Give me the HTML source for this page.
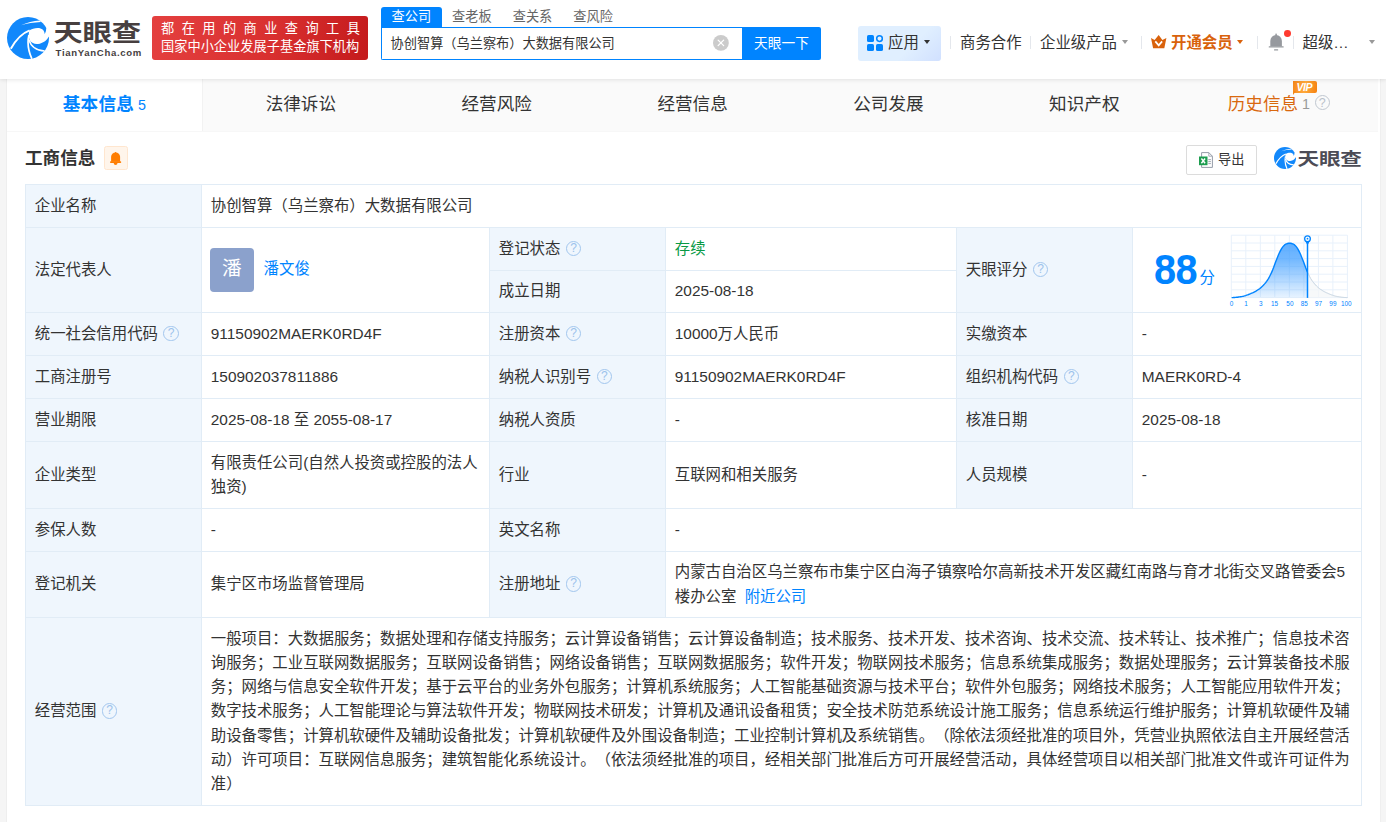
<!DOCTYPE html>
<html lang="zh-CN">
<head>
<meta charset="utf-8">
<title>协创智算（乌兰察布）大数据有限公司 - 天眼查</title>
<style>
*{box-sizing:border-box;}
html,body{margin:0;padding:0;}
body{width:1386px;height:822px;overflow:hidden;background:#f5f5f5;color:#333;
  font-family:"Liberation Sans","Noto Sans CJK SC",sans-serif;font-size:15.4px;
  text-spacing-trim:space-all;position:relative;}
a{color:#0084ff;text-decoration:none;}

/* ---------- header ---------- */
.hd{position:absolute;left:0;top:0;width:1386px;height:79px;background:#fff;
  box-shadow:0 1px 4px rgba(0,0,0,.1);z-index:5;}
.logo-ico{position:absolute;left:7px;top:17px;width:42px;height:42px;}
.logo-cn{position:absolute;left:53.5px;top:11px;font-size:29.4px;line-height:42px;font-weight:700;
  color:#473f3f;letter-spacing:-.3px;white-space:nowrap;transform:scaleY(.82);transform-origin:0 28px;}
.logo-en{position:absolute;left:55.6px;top:46px;font-size:9.6px;line-height:13px;font-weight:700;
  color:#473f3f;letter-spacing:.66px;white-space:nowrap;}
.slogan{position:absolute;left:152px;top:16px;width:216px;height:44px;border-radius:3px;
  background:linear-gradient(100deg,#e4403f 0%,#d93030 55%,#c41a1c 100%);color:#fff;
  font-size:13.2px;line-height:17.6px;padding:4px 0 0 9px;white-space:nowrap;}
.slogan .l1{letter-spacing:7.45px;}
.slogan .l2{letter-spacing:.03px;}

.stabs{position:absolute;left:381px;top:7px;height:21px;white-space:nowrap;font-size:13.2px;line-height:19px;color:#666;}
.stabs span{display:inline-block;width:60.6px;height:21px;text-align:center;vertical-align:top;}
.stabs span.on{background:#0084ff;color:#fff;border-radius:3px 3px 0 0;}
.sbox{position:absolute;left:381px;top:27px;width:362px;height:33px;border:1px solid #0084ff;border-right:0;
  border-radius:0 0 0 2px;background:#fff;font-size:13.2px;line-height:32.6px;padding-left:8.6px;color:#333;white-space:nowrap;}
.sclr{position:absolute;left:712.9px;top:34.9px;width:15.8px;height:15.8px;}
.sbtn{position:absolute;left:742px;top:27px;width:79px;height:33px;background:#0084ff;color:#fff;
  border-radius:0 2px 2px 0;font-size:13.7px;line-height:33.5px;text-align:center;white-space:nowrap;}

.app{position:absolute;left:858px;top:26px;width:83px;height:35px;border-radius:3px;background:linear-gradient(135deg,rgba(224,239,255,0) 62%,rgba(196,212,255,.55) 100%),#e0efff;}
.app svg{position:absolute;left:9px;top:9px;width:16px;height:16px;}
.app b{position:absolute;left:30px;top:0;font-weight:400;font-size:15.4px;line-height:34.8px;color:#333;white-space:nowrap;}
.caret{position:absolute;width:0;height:0;border-left:3.9px solid transparent;border-right:3.9px solid transparent;border-top:4.6px solid #333;}
.sep{position:absolute;top:36px;width:1px;height:13px;background:#e4e7ec;}
.nav{position:absolute;top:26px;height:35px;line-height:34.8px;font-size:15.4px;color:#333;white-space:nowrap;}
.vipnav{color:#d9620c;font-weight:700;line-height:33.8px;}

/* ---------- main container ---------- */
.wrap{position:absolute;left:7px;top:79px;width:1373px;height:760px;background:#fff;box-shadow:-1px 0 0 #eee,1px 0 0 #efefef;}
.tabs{position:absolute;left:0;top:0;width:1371px;height:53px;background:#fafafa;border-bottom:1px solid #f7f7f7;}
.tab{position:absolute;top:0;width:196px;height:52px;line-height:50.6px;text-align:center;font-size:17.6px;color:#333;white-space:nowrap;}
.tab.on{background:#fff;color:#0084ff;font-weight:700;border-right:1px solid #f2f2f2;height:52px;letter-spacing:.25px;}
.tab.on small{font-weight:400;}
.tab small{font-size:14.3px;margin-left:4px;}
.tab.his{color:#d9680e;}
.tab.his small{color:#999;position:relative;top:-1.5px;}

.sec-t{position:absolute;left:18px;top:64.7px;font-size:17.6px;line-height:28px;font-weight:700;color:#333;white-space:nowrap;}
.bellbox{position:absolute;left:97px;top:67px;width:24px;height:24px;border:1px solid #ffe6cf;background:#fff5eb;border-radius:2.5px;}
.bellbox svg{position:absolute;left:5px;top:4.5px;width:12px;height:13px;}
.exp{position:absolute;left:1179px;top:66px;width:71px;height:30px;border:1px solid #dcdcdc;border-radius:2px;background:#fff;
  font-size:13.2px;line-height:28px;color:#333;white-space:nowrap;}
.exp svg{position:absolute;left:12px;top:5.6px;width:14px;height:16px;}
.exp span{position:absolute;left:31px;top:0;}
.wm{position:absolute;left:1266.5px;top:67px;height:24px;white-space:nowrap;}
.wm svg{position:absolute;left:0;top:1px;width:22px;height:22px;}
.wm b{position:absolute;left:24px;top:-2.1px;font-size:21.6px;line-height:28px;font-weight:700;color:#4c4c56;letter-spacing:-.2px;transform:scaleY(.8);transform-origin:0 22.5px;}

.vip{position:absolute;left:110.7px;top:2px;width:24px;height:12px;border-radius:0 2px 2px 0;background:linear-gradient(100deg,#f5861a 0%,#ffaa3c 50%,#f5800e 100%);color:#fff;
  font-size:10.5px;line-height:12px;font-weight:700;font-style:italic;text-align:center;letter-spacing:-.4px;text-indent:-1px;font-family:"Liberation Sans",sans-serif;}
.vip:after{content:"";position:absolute;left:0;top:10px;border-left:3px solid #f5861a;border-bottom:4px solid transparent;}
/* ---------- table ---------- */
table.t{position:absolute;left:18px;top:105px;width:1337px;border-collapse:separate;border-spacing:0;table-layout:fixed;
  border-top:1px solid #e1ecf6;border-left:1px solid #e1ecf6;font-size:15.4px;line-height:24.2px;color:#333;}
table.t td{border-right:1px solid #e1ecf6;border-bottom:1px solid #e1ecf6;padding:0 8.8px;vertical-align:middle;background:#fff;
  word-break:break-all;overflow:hidden;}
table.t td.k{background:#eff6fd;}
.q{display:inline-block;width:15.4px;height:15.4px;border:1.1px solid #a2c6ee;border-radius:50%;color:#9cc2ec;font-size:12px;line-height:13.2px;text-align:center;vertical-align:2.1px;margin-left:5.5px;font-weight:400;font-style:normal;}
.green{color:#089944;}
.ava{display:inline-block;width:44px;height:44px;border-radius:4px;background:#8ba1cc;color:#fff;text-align:center;
  font-size:19.8px;line-height:41.6px;vertical-align:middle;margin:0 9.6px 0 -.8px;}
.score{position:relative;height:84px;}
.score .n{position:absolute;left:20.8px;top:19.5px;font-size:41.8px;line-height:44px;font-weight:700;color:#0084ff;letter-spacing:-.6px;transform:scaleX(.95);transform-origin:0 0;}
.score .f{position:absolute;left:66.5px;top:38px;font-size:15.4px;line-height:24px;color:#0084ff;}
.score svg{position:absolute;left:0;top:0;width:228px;height:84px;}
.scope{white-space:nowrap;}
</style>
</head>
<body>

<div class="hd">
  <svg class="logo-ico" viewBox="0 0 42 42"><circle cx="21" cy="21" r="21" fill="#1288fb"/><path d="M22.3,13.6C25,11.6 30,10.4 33.5,11.4C36.3,12.3 37.8,14.6 37.6,17.3C38.6,15.6 39.3,13.6 39.1,11.6L43,10.5V19.6L41.7,19.7C40,23.2 36,26.4 31,26.9C27.5,27.2 24.6,26.2 23,23.5C21.6,21 21.4,17 22.3,13.6Z" fill="#fff"/><path d="M3.8,31.8C8,24 14,16.6 22.6,13.3" stroke="#fff" stroke-width="1.9" fill="none"/><path d="M21.9,18C20.3,25 21.5,34.5 24.9,41.8" stroke="#fff" stroke-width="1.7" fill="none"/><path d="M22,22.6C23.6,29.2 29.5,33.6 37.6,34" stroke="#fff" stroke-width="1.7" fill="none"/><path d="M14,8.3C20,5.5 26,4.1 33.2,3.5L33.8,4.9C27,5.2 20,6.3 14,8.3Z" fill="#fff"/></svg>
  <div class="logo-cn">天眼查</div>
  <div class="logo-en">TianYanCha.com</div>
  <div class="slogan"><div class="l1">都在用的商业查询工具</div><div class="l2">国家中小企业发展子基金旗下机构</div></div>

  <div class="stabs"><span class="on">查公司</span><span>查老板</span><span>查关系</span><span>查风险</span></div>
  <div class="sbox">协创智算（乌兰察布）大数据有限公司</div>
  <svg class="sclr" viewBox="0 0 16 16"><circle cx="8" cy="8" r="8" fill="#cbcbcb"/><path d="M5.2 5.2l5.6 5.6M10.8 5.2l-5.6 5.6" stroke="#fff" stroke-width="1.3" stroke-linecap="round"/></svg>
  <div class="sbtn">天眼一下</div>

  <div class="app">
    <svg viewBox="0 0 16 16"><rect x="0" y="0" width="7" height="7" rx="1.6" fill="#0084ff"/><rect x="0" y="9" width="7" height="7" rx="1.6" fill="#0084ff"/><rect x="9" y="9" width="7" height="7" rx="1.6" fill="#0084ff"/><circle cx="12.5" cy="3.6" r="2.8" fill="none" stroke="#0084ff" stroke-width="1.5"/></svg>
    <b>应用</b>
    <i class="caret" style="left:66.3px;top:14px;"></i>
  </div>
  <i class="sep" style="left:950px"></i>
  <div class="nav" style="left:960px">商务合作</div>
  <i class="sep" style="left:1030px"></i>
  <div class="nav" style="left:1040px">企业级产品</div>
  <i class="caret" style="left:1121.6px;top:40px;border-top-color:#999;"></i>
  <i class="sep" style="left:1141px"></i>
  <svg style="position:absolute;left:1151px;top:35px;width:15.5px;height:13.5px" viewBox="0 0 15.5 13.5"><path d="M0 2.9L3.6 4.9 7.7 0 11.4 4.9 15.4 2.9 13.3 13.2H2.1z" fill="#d9620c"/><path d="M4.3 6.4l3.4 4 3.4-4" stroke="#fff" stroke-width="1.7" fill="none"/></svg>
  <div class="nav vipnav" style="left:1171px">开通会员</div>
  <i class="caret" style="left:1237.4px;top:40px;border-top-color:#d9620c;"></i>
  <i class="sep" style="left:1257px"></i>
  <svg style="position:absolute;left:1268px;top:33.1px;width:16px;height:18.5px" viewBox="0 0 16 18.5"><g fill="#96999e"><path d="M2.3 13.6V7.9a5.8 5.8 0 0 1 11.6 0V13.6z"/><rect x="7.35" y=".5" width="1.5" height="2.4" rx=".6"/><rect x=".7" y="13.2" width="15" height="1.4" rx=".5"/><rect x="6" y="16.3" width="4.2" height="1.3" rx=".5"/></g></svg>
  <i style="position:absolute;left:1284px;top:30.3px;width:6.8px;height:6.8px;border-radius:50%;background:#ff3b30;"></i>
  <i class="sep" style="left:1293px"></i>
  <div class="nav" style="left:1302.5px">超级…</div>
  <i class="caret" style="left:1369.2px;top:40px;border-top-color:#999;"></i>
</div>

<div class="wrap">
  <div class="tabs">
    <div class="tab on" style="left:0">基本信息<small>5</small></div>
    <div class="tab" style="left:195.86px">法律诉讼</div>
    <div class="tab" style="left:391.72px">经营风险</div>
    <div class="tab" style="left:587.58px">经营信息</div>
    <div class="tab" style="left:783.44px">公司发展</div>
    <div class="tab" style="left:979.3px">知识产权</div>
    <div class="tab his" style="left:1175.16px;padding-right:2.6px">历史信息<small>1</small><i class="q" style="border:1.3px solid #c0c7d0;color:#b9c1cb;margin-left:4.6px;vertical-align:3.3px;font-size:12.5px;line-height:14.2px">?</i><em class="vip">VIP</em></div>
  </div>

  <div class="sec-t">工商信息</div>
  <div class="bellbox"><svg viewBox="0 0 12 13"><g fill="#ff7d00"><path d="M1.1 9.8V5a4.5 4.5 0 0 1 9 0v4.8z"/><circle cx="5.6" cy=".7" r=".7"/><rect x="0" y="9.3" width="11.2" height="1.8" rx=".8"/><path d="M3.7 11a1.9 1.9 0 0 0 3.8 0z"/></g></svg></div>
  <div class="exp"><svg viewBox="0 0 14 16"><path d="M2.6.6h7.2l3.6 3.6v11.2h-10.8z" fill="#fff" stroke="#959ca8" stroke-width="1"/><path d="M9.8.6v3.6h3.6" fill="none" stroke="#959ca8" stroke-width=".8"/><path d="M9.3 7.6h2.6M9.3 9.6h2.6M9.3 11.6h2.6" stroke="#959ca8" stroke-width=".9"/><rect x="0" y="4.5" width="8.5" height="8.7" fill="#1d9d4f"/><path d="M2.4 6.5l3.7 4.7M6.1 6.5l-3.7 4.7" stroke="#fff" stroke-width="1.4"/></svg><span>导出</span></div>
  <div class="wm"><svg viewBox="0 0 42 42"><circle cx="21" cy="21" r="21" fill="#1288fb"/><path d="M22.3,13.6C25,11.6 30,10.4 33.5,11.4C36.3,12.3 37.8,14.6 37.6,17.3C38.6,15.6 39.3,13.6 39.1,11.6L43,10.5V19.6L41.7,19.7C40,23.2 36,26.4 31,26.9C27.5,27.2 24.6,26.2 23,23.5C21.6,21 21.4,17 22.3,13.6Z" fill="#fff"/><path d="M3.8,31.8C8,24 14,16.6 22.6,13.3" stroke="#fff" stroke-width="2.3" fill="none"/><path d="M21.9,18C20.3,25 21.5,34.5 24.9,41.8" stroke="#fff" stroke-width="2.2" fill="none"/><path d="M22,22.6C23.6,29.2 29.5,33.6 37.6,34" stroke="#fff" stroke-width="2.2" fill="none"/><path d="M14,8.3C20,5.5 26,4.1 33.2,3.5L33.8,4.9C27,5.2 20,6.3 14,8.3Z" fill="#fff"/></svg><b>天眼查</b></div>

  <table class="t">
    <colgroup><col style="width:176px"><col style="width:288px"><col style="width:176px"><col style="width:291px"><col style="width:176px"><col style="width:229px"></colgroup>
    <tr style="height:43px"><td class="k">企业名称</td><td colspan="5">协创智算（乌兰察布）大数据有限公司</td></tr>
    <tr style="height:43px"><td class="k" rowspan="2">法定代表人</td><td rowspan="2"><span class="ava">潘</span><a>潘文俊</a></td><td class="k">登记状态<i class="q">?</i></td><td class="green">存续</td><td class="k" rowspan="2">天眼评分<i class="q">?</i></td><td rowspan="2" style="padding:0"><div class="score"><span class="n">88</span><span class="f">分</span><svg viewBox="0 0 228 84" width="228" height="84"><defs><linearGradient id="cg" x1="0" y1="15" x2="0" y2="69.6" gradientUnits="userSpaceOnUse"><stop offset="0" stop-color="#3d9dff" stop-opacity=".82"/><stop offset=".3" stop-color="#3d9dff" stop-opacity=".72"/><stop offset="1" stop-color="#3d9dff" stop-opacity=".12"/></linearGradient></defs><path d="M98.30,7.2V69.6M112.81,7.2V69.6M127.32,7.2V69.6M141.84,7.2V69.6M156.35,7.2V69.6M170.86,7.2V69.6M185.38,7.2V69.6M199.89,7.2V69.6M214.40,7.2V69.6M98.3,7.20H214.4M98.3,15.00H214.4M98.3,22.80H214.4M98.3,30.60H214.4M98.3,38.40H214.4M98.3,46.20H214.4M98.3,54.00H214.4M98.3,61.80H214.4M98.3,69.60H214.4" stroke="#e8f1fb" stroke-width="1" fill="none"/><path d="M174.5,44.1 L174.6,44.4 L175.6,46.5 L176.6,48.5 L177.6,50.4 L178.6,52.0 L179.6,53.4 L180.6,54.7 L181.6,55.9 L182.6,57.0 L183.6,58.1 L184.6,59.0 L185.6,59.9 L186.6,60.7 L187.6,61.4 L188.6,62.0 L189.6,62.7 L190.6,63.3 L191.6,63.8 L192.6,64.3 L193.6,64.8 L194.6,65.2 L195.6,65.7 L196.6,66.1 L197.6,66.5 L198.6,66.9 L199.6,67.2 L200.6,67.6 L201.6,67.9 L202.6,68.2 L203.6,68.4 L204.6,68.6 L205.6,68.7 L206.6,68.9 L207.6,69.0 L208.6,69.2 L209.6,69.3 L210.6,69.4 L211.6,69.5 L212.6,69.5 L213.6,69.6 L214.6,69.6 L214.6,69.6 L174.5,69.6Z" fill="#f4f6f8" fill-opacity=".7"/><path d="M174.5,44.1 L174.6,44.4 L175.6,46.5 L176.6,48.5 L177.6,50.4 L178.6,52.0 L179.6,53.4 L180.6,54.7 L181.6,55.9 L182.6,57.0 L183.6,58.1 L184.6,59.0 L185.6,59.9 L186.6,60.7 L187.6,61.4 L188.6,62.0 L189.6,62.7 L190.6,63.3 L191.6,63.8 L192.6,64.3 L193.6,64.8 L194.6,65.2 L195.6,65.7 L196.6,66.1 L197.6,66.5 L198.6,66.9 L199.6,67.2 L200.6,67.6 L201.6,67.9 L202.6,68.2 L203.6,68.4 L204.6,68.6 L205.6,68.7 L206.6,68.9 L207.6,69.0 L208.6,69.2 L209.6,69.3 L210.6,69.4 L211.6,69.5 L212.6,69.5 L213.6,69.6 L214.6,69.6" stroke="#c5d3e0" stroke-width="1" fill="none"/><path d="M98.6,69.6 L99.6,69.6 L100.6,69.5 L101.6,69.5 L102.6,69.4 L103.6,69.3 L104.6,69.2 L105.6,69.0 L106.6,68.9 L107.6,68.7 L108.6,68.6 L109.6,68.4 L110.6,68.2 L111.6,67.9 L112.6,67.6 L113.6,67.2 L114.6,66.9 L115.6,66.5 L116.6,66.1 L117.6,65.7 L118.6,65.2 L119.6,64.8 L120.6,64.3 L121.6,63.8 L122.6,63.3 L123.6,62.7 L124.6,62.0 L125.6,61.4 L126.6,60.7 L127.6,59.9 L128.6,59.0 L129.6,58.1 L130.6,57.0 L131.6,55.9 L132.6,54.7 L133.6,53.4 L134.6,52.0 L135.6,50.4 L136.6,48.5 L137.6,46.5 L138.6,44.4 L139.6,42.1 L140.6,39.5 L141.6,36.7 L142.6,34.0 L143.6,31.4 L144.6,28.9 L145.6,26.5 L146.6,24.3 L147.6,22.4 L148.6,20.6 L149.6,19.1 L150.6,17.9 L151.6,16.9 L152.6,16.2 L153.6,15.8 L154.6,15.5 L155.6,15.3 L156.6,15.2 L157.6,15.3 L158.6,15.5 L159.6,15.8 L160.6,16.2 L161.6,16.9 L162.6,17.9 L163.6,19.1 L164.6,20.6 L165.6,22.4 L166.6,24.3 L167.6,26.5 L168.6,28.9 L169.6,31.4 L170.6,34.0 L171.6,36.7 L172.6,39.5 L173.6,42.1 L174.5,44.1 L174.5,69.6 L98.6,69.6Z" fill="url(#cg)"/><path d="M98.6,69.6 L99.6,69.6 L100.6,69.5 L101.6,69.5 L102.6,69.4 L103.6,69.3 L104.6,69.2 L105.6,69.0 L106.6,68.9 L107.6,68.7 L108.6,68.6 L109.6,68.4 L110.6,68.2 L111.6,67.9 L112.6,67.6 L113.6,67.2 L114.6,66.9 L115.6,66.5 L116.6,66.1 L117.6,65.7 L118.6,65.2 L119.6,64.8 L120.6,64.3 L121.6,63.8 L122.6,63.3 L123.6,62.7 L124.6,62.0 L125.6,61.4 L126.6,60.7 L127.6,59.9 L128.6,59.0 L129.6,58.1 L130.6,57.0 L131.6,55.9 L132.6,54.7 L133.6,53.4 L134.6,52.0 L135.6,50.4 L136.6,48.5 L137.6,46.5 L138.6,44.4 L139.6,42.1 L140.6,39.5 L141.6,36.7 L142.6,34.0 L143.6,31.4 L144.6,28.9 L145.6,26.5 L146.6,24.3 L147.6,22.4 L148.6,20.6 L149.6,19.1 L150.6,17.9 L151.6,16.9 L152.6,16.2 L153.6,15.8 L154.6,15.5 L155.6,15.3 L156.6,15.2 L157.6,15.3 L158.6,15.5 L159.6,15.8 L160.6,16.2 L161.6,16.9 L162.6,17.9 L163.6,19.1 L164.6,20.6 L165.6,22.4 L166.6,24.3 L167.6,26.5 L168.6,28.9 L169.6,31.4 L170.6,34.0 L171.6,36.7 L172.6,39.5 L173.6,42.1 L174.5,44.1" stroke="#0084ff" stroke-width="1.4" fill="none" stroke-linejoin="round"/><path d="M174.5,14V69.89999999999999" stroke="#0084ff" stroke-width="1.5"/><path d="M174.5,17.2 L171.9,12.6 H177.1Z" fill="#0084ff"/><circle cx="174.5" cy="10.7" r="2.85" fill="#fff" stroke="#0084ff" stroke-width="1.3"/><circle cx="174.5" cy="10.7" r=".9" fill="#0084ff"/><g font-family="Liberation Sans, sans-serif" font-size="6.4" fill="#0084ff" text-anchor="middle"><text x="98.5" y="78.0">0</text><text x="113.1" y="78.0">1</text><text x="127.7" y="78.0">3</text><text x="141.6" y="78.0">15</text><text x="156.9" y="78.0">50</text><text x="171.2" y="78.0">85</text><text x="185.6" y="78.0">97</text><text x="199.9" y="78.0">99</text><text x="213.3" y="78.0">100</text></g></svg></div></td></tr>
    <tr style="height:42px"><td class="k">成立日期</td><td>2025-08-18</td></tr>
    <tr style="height:43px"><td class="k">统一社会信用代码<i class="q">?</i></td><td>91150902MAERK0RD4F</td><td class="k">注册资本<i class="q">?</i></td><td>10000万人民币</td><td class="k">实缴资本</td><td>-</td></tr>
    <tr style="height:43px"><td class="k">工商注册号</td><td>150902037811886</td><td class="k">纳税人识别号<i class="q">?</i></td><td>91150902MAERK0RD4F</td><td class="k">组织机构代码<i class="q">?</i></td><td>MAERK0RD-4</td></tr>
    <tr style="height:43px"><td class="k">营业期限</td><td>2025-08-18 至 2055-08-17</td><td class="k">纳税人资质</td><td>-</td><td class="k">核准日期</td><td>2025-08-18</td></tr>
    <tr style="height:67px"><td class="k">企业类型</td><td>有限责任公司(自然人投资或控股的法人独资)</td><td class="k">行业</td><td>互联网和相关服务</td><td class="k">人员规模</td><td>-</td></tr>
    <tr style="height:43px"><td class="k">参保人数</td><td>-</td><td class="k">英文名称</td><td colspan="3">-</td></tr>
    <tr style="height:66px"><td class="k">登记机关</td><td>集宁区市场监督管理局</td><td class="k">注册地址<i class="q">?</i></td><td colspan="3">内蒙古自治区乌兰察布市集宁区白海子镇察哈尔高新技术开发区藏红南路与育才北街交叉路管委会5楼办公室 <a style="margin-left:4px">附近公司</a></td></tr>
    <tr style="height:188px"><td class="k">经营范围<i class="q">?</i></td><td colspan="5" class="scope">一般项目：大数据服务；数据处理和存储支持服务；云计算设备销售；云计算设备制造；技术服务、技术开发、技术咨询、技术交流、技术转让、技术推广；信息技术咨<br>询服务；工业互联网数据服务；互联网设备销售；网络设备销售；互联网数据服务；软件开发；物联网技术服务；信息系统集成服务；数据处理服务；云计算装备技术服<br>务；网络与信息安全软件开发；基于云平台的业务外包服务；计算机系统服务；人工智能基础资源与技术平台；软件外包服务；网络技术服务；人工智能应用软件开发；<br>数字技术服务；人工智能理论与算法软件开发；物联网技术研发；计算机及通讯设备租赁；安全技术防范系统设计施工服务；信息系统运行维护服务；计算机软硬件及辅<br>助设备零售；计算机软硬件及辅助设备批发；计算机软硬件及外围设备制造；工业控制计算机及系统销售。（除依法须经批准的项目外，凭营业执照依法自主开展经营活<br>动）许可项目：互联网信息服务；建筑智能化系统设计。（依法须经批准的项目，经相关部门批准后方可开展经营活动，具体经营项目以相关部门批准文件或许可证件为<br>准）</td></tr>
  </table>
</div>

</body>
</html>
